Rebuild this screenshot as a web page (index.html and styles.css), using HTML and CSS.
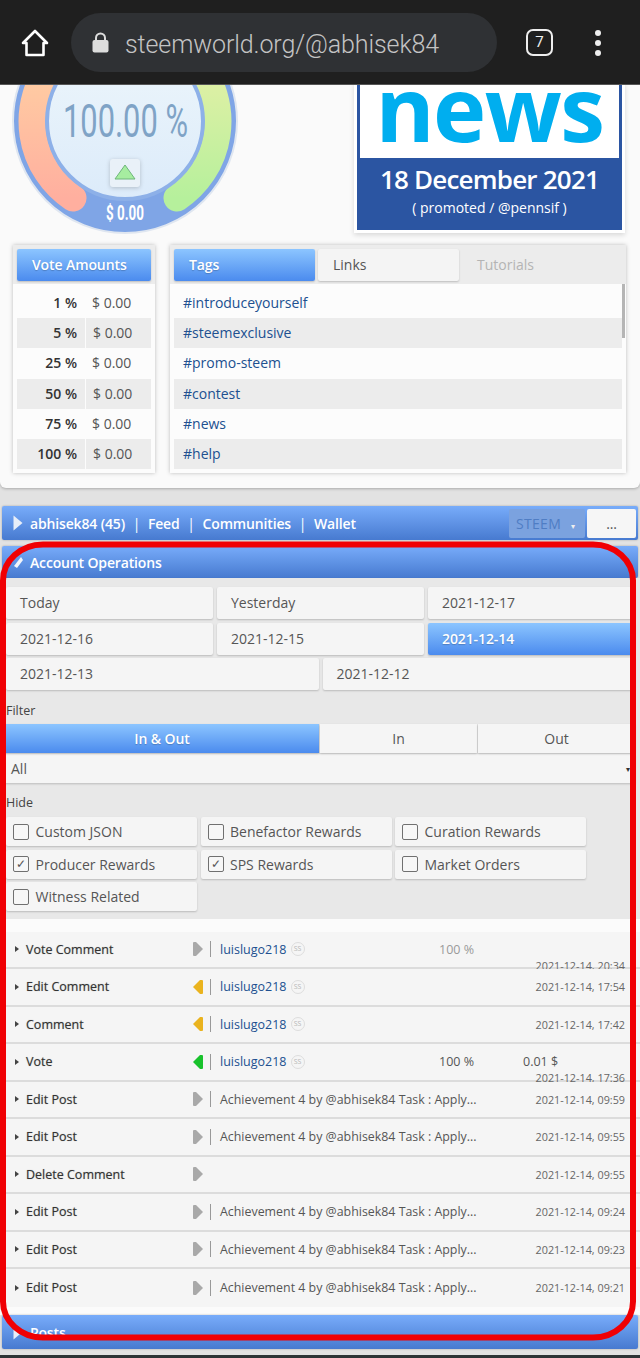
FILE: index.html
```html
<!DOCTYPE html>
<html lang="en">

<head>
    <meta charset="UTF-8">
    <meta name="viewport" content="width=device-width, initial-scale=1.0">
    <title>SteemWorld: abhisek84</title>
    <link rel="stylesheet" href="styles.css">
</head>

<body>
    <header class="browser-bar">
        <svg class="home-icon" width="30" height="30" viewBox="0 0 30 30">
            <path d="M15 3 L27 15 H23.5 V27 H6.5 V15 H3 Z" fill="none" stroke="#fff" stroke-width="2.6" stroke-linejoin="round"/>
        </svg>
        <div class="url-pill">
            <svg class="lock-icon" width="17" height="21" viewBox="0 0 17 21">
                <path d="M4 9 V6 a4.5 4.5 0 0 1 9 0 V9" fill="none" stroke="#ddd" stroke-width="2"/>
                <rect x="0.5" y="8" width="16" height="12.500" rx="2" fill="#ddd"/>
            </svg>
            <span class="url-text">steemworld.org/@abhisek84</span>
        </div>
        <div class="tab-count">7</div>
        <div class="menu-dots"><i></i><i></i><i></i></div>
    </header>

    <section class="top-panel">
        <div class="top-row">
            <svg class="gauge" width="250" height="160" viewBox="0 84 250 160">
                <defs>
                    <linearGradient id="orangeArc" x1="0" y1="0" x2="0" y2="1">
                        <stop offset="0" stop-color="#ffcfa3"/>
                        <stop offset="1" stop-color="#ffaf9f"/>
                    </linearGradient>
                    <linearGradient id="greenArc" x1="0" y1="0" x2="0" y2="1">
                        <stop offset="0" stop-color="#e4f0a6"/>
                        <stop offset="1" stop-color="#b6f09c"/>
                    </linearGradient>
                    <linearGradient id="gaugeFace" x1="0" y1="0" x2="0" y2="1">
                        <stop offset="0" stop-color="#edf6fb"/>
                        <stop offset="1" stop-color="#dcebfa"/>
                    </linearGradient>
                </defs>
                <circle cx="125" cy="120" r="112" fill="#7fa5e6" stroke="#dfe6f0" stroke-width="2"/>
                <path d="M53 62 A 92 92 0 0 0 73 197" fill="none" stroke="url(#orangeArc)" stroke-width="27" stroke-linecap="round"/>
                <path d="M197 62 A 92 92 0 0 1 177 197" fill="none" stroke="url(#greenArc)" stroke-width="27" stroke-linecap="round"/>
                <circle cx="125" cy="120" r="78" fill="url(#gaugeFace)" stroke="#8db0e8" stroke-width="4"/>
                <text class="gauge-value" x="63" y="136" textLength="125" lengthAdjust="spacingAndGlyphs">100.00 %</text>
                <rect class="gauge-btn" x="110" y="158" width="30" height="28" rx="3" fill="#e9f1f8"/>
                <path d="M115 178 L125 164 L135 178 Z" fill="#a6eda0" stroke="#6fb57b" stroke-width="1" stroke-linejoin="round"/>
                <text class="gauge-money" x="106" y="219" textLength="38" lengthAdjust="spacingAndGlyphs">$ 0.00</text>
            </svg>
            <div class="news-card">
                <div class="news-head"><span class="news-word">news</span></div>
                <div class="news-date">18 December 2021</div>
                <div class="news-sub">( promoted / @pennsif )</div>
            </div>
        </div>
        <div class="tables">
            <div class="votes">
                <div class="tab-row"><div class="tab tab-on tab-full">Vote Amounts</div></div>
                <div class="vote-list">
                    <div class="vote-row"><b>1 %</b><span>$ 0.00</span></div>
                    <div class="vote-row alt"><b>5 %</b><span>$ 0.00</span></div>
                    <div class="vote-row"><b>25 %</b><span>$ 0.00</span></div>
                    <div class="vote-row alt"><b>50 %</b><span>$ 0.00</span></div>
                    <div class="vote-row"><b>75 %</b><span>$ 0.00</span></div>
                    <div class="vote-row alt"><b>100 %</b><span>$ 0.00</span></div>
                </div>
            </div>
            <div class="tags">
                <div class="tab-row">
                    <div class="tab tab-on">Tags</div>
                    <div class="tab">Links</div>
                    <div class="tab tab-off">Tutorials</div>
                </div>
                <div class="tag-list">
                    <div class="tag-row">#introduceyourself</div>
                    <div class="tag-row alt">#steemexclusive</div>
                    <div class="tag-row">#promo-steem</div>
                    <div class="tag-row alt">#contest</div>
                    <div class="tag-row">#news</div>
                    <div class="tag-row alt">#help</div>
                    <div class="tag-scroll"></div>
                </div>
            </div>
        </div>
    </section>

    <nav class="blue-bar user-bar">
        <svg class="bar-arrow" width="12" height="18" viewBox="0 0 12 18"><path d="M1.500 1.500 L10.500 9 L1.500 16.500 Z" fill="#e8eef8"/></svg>
        <span>abhisek84 (45)</span><span class="sep">|</span>
        <span>Feed</span><span class="sep">|</span>
        <span>Communities</span><span class="sep">|</span>
        <span>Wallet</span>
        <div class="steem-select">STEEM<small>▾</small></div>
        <div class="more-btn">...</div>
    </nav>

    <section class="operations">
        <div class="blue-bar ops-bar">
            <svg class="bar-arrow" width="12" height="18" viewBox="0 0 12 18"><path d="M2 13 L9 4 L11 7 L5 15 Z" fill="#f2f5fa"/></svg>
            <span>Account Operations</span>
        </div>
        <div class="ops-body">
            <div class="date-row">
                <div class="btn">Today</div>
                <div class="btn">Yesterday</div>
                <div class="btn">2021-12-17</div>
            </div>
            <div class="date-row">
                <div class="btn">2021-12-16</div>
                <div class="btn">2021-12-15</div>
                <div class="btn btn-on">2021-12-14</div>
            </div>
            <div class="date-row">
                <div class="btn">2021-12-13</div>
                <div class="btn">2021-12-12</div>
            </div>

            <div class="field-label filter-label">Filter</div>
            <div class="filter-row">
                <div class="filter-btn filter-main btn-on">In &amp; Out</div>
                <div class="filter-btn filter-in">In</div>
                <div class="filter-btn filter-out">Out</div>
            </div>
            <div class="select-all">All<small>▾</small></div>

            <div class="field-label hide-label">Hide</div>
            <div class="check-grid">
                <div class="check"><i class="box"></i>Custom JSON</div>
                <div class="check"><i class="box"></i>Benefactor Rewards</div>
                <div class="check"><i class="box"></i>Curation Rewards</div>
                <div class="check"><i class="box on">✓</i>Producer Rewards</div>
                <div class="check"><i class="box on">✓</i>SPS Rewards</div>
                <div class="check"><i class="box"></i>Market Orders</div>
                <div class="check"><i class="box"></i>Witness Related</div>
            </div>
        </div>

        <div class="op-list">
            <div class="op-row">
                <i class="caret"></i><span class="op-name">Vote Comment</span>
                <svg class="dir" width="12" height="16" viewBox="0 0 12 16"><path d="M1 2 Q1 1 2 1 H4 L11 8 L4 15 H2 Q1 15 1 14 Z" fill="#a9a9a9"/></svg>
                <span class="op-sep"></span><a class="op-user">luislugo218</a><span class="ss">SS</span>
                <span class="op-pct muted">100 %</span>
                <span class="op-time low">2021-12-14, 20:34</span>
            </div>
            <div class="op-row">
                <i class="caret"></i><span class="op-name">Edit Comment</span>
                <svg class="dir" width="12" height="16" viewBox="0 0 12 16"><path d="M11 2 Q11 1 10 1 H8 L1 8 L8 15 H10 Q11 15 11 14 Z" fill="#eab31e"/></svg>
                <span class="op-sep"></span><a class="op-user">luislugo218</a><span class="ss">SS</span>
                <span class="op-time">2021-12-14, 17:54</span>
            </div>
            <div class="op-row">
                <i class="caret"></i><span class="op-name">Comment</span>
                <svg class="dir" width="12" height="16" viewBox="0 0 12 16"><path d="M11 2 Q11 1 10 1 H8 L1 8 L8 15 H10 Q11 15 11 14 Z" fill="#eab31e"/></svg>
                <span class="op-sep"></span><a class="op-user">luislugo218</a><span class="ss">SS</span>
                <span class="op-time">2021-12-14, 17:42</span>
            </div>
            <div class="op-row">
                <i class="caret"></i><span class="op-name">Vote</span>
                <svg class="dir" width="12" height="16" viewBox="0 0 12 16"><path d="M11 2 Q11 1 10 1 H8 L1 8 L8 15 H10 Q11 15 11 14 Z" fill="#18c22c"/></svg>
                <span class="op-sep"></span><a class="op-user">luislugo218</a><span class="ss">SS</span>
                <span class="op-pct">100 %</span><span class="op-amount">0.01 $</span>
                <span class="op-time low">2021-12-14, 17:36</span>
            </div>
            <div class="op-row">
                <i class="caret"></i><span class="op-name">Edit Post</span>
                <svg class="dir" width="12" height="16" viewBox="0 0 12 16"><path d="M1 2 Q1 1 2 1 H4 L11 8 L4 15 H2 Q1 15 1 14 Z" fill="#a9a9a9"/></svg>
                <span class="op-sep"></span><span class="op-title">Achievement 4 by @abhisek84 Task : Apply...</span>
                <span class="op-time">2021-12-14, 09:59</span>
            </div>
            <div class="op-row">
                <i class="caret"></i><span class="op-name">Edit Post</span>
                <svg class="dir" width="12" height="16" viewBox="0 0 12 16"><path d="M1 2 Q1 1 2 1 H4 L11 8 L4 15 H2 Q1 15 1 14 Z" fill="#a9a9a9"/></svg>
                <span class="op-sep"></span><span class="op-title">Achievement 4 by @abhisek84 Task : Apply...</span>
                <span class="op-time">2021-12-14, 09:55</span>
            </div>
            <div class="op-row">
                <i class="caret"></i><span class="op-name">Delete Comment</span>
                <svg class="dir" width="12" height="16" viewBox="0 0 12 16"><path d="M1 2 Q1 1 2 1 H4 L11 8 L4 15 H2 Q1 15 1 14 Z" fill="#a9a9a9"/></svg>
                <span class="op-time">2021-12-14, 09:55</span>
            </div>
            <div class="op-row">
                <i class="caret"></i><span class="op-name">Edit Post</span>
                <svg class="dir" width="12" height="16" viewBox="0 0 12 16"><path d="M1 2 Q1 1 2 1 H4 L11 8 L4 15 H2 Q1 15 1 14 Z" fill="#a9a9a9"/></svg>
                <span class="op-sep"></span><span class="op-title">Achievement 4 by @abhisek84 Task : Apply...</span>
                <span class="op-time">2021-12-14, 09:24</span>
            </div>
            <div class="op-row">
                <i class="caret"></i><span class="op-name">Edit Post</span>
                <svg class="dir" width="12" height="16" viewBox="0 0 12 16"><path d="M1 2 Q1 1 2 1 H4 L11 8 L4 15 H2 Q1 15 1 14 Z" fill="#a9a9a9"/></svg>
                <span class="op-sep"></span><span class="op-title">Achievement 4 by @abhisek84 Task : Apply...</span>
                <span class="op-time">2021-12-14, 09:23</span>
            </div>
            <div class="op-row">
                <i class="caret"></i><span class="op-name">Edit Post</span>
                <svg class="dir" width="12" height="16" viewBox="0 0 12 16"><path d="M1 2 Q1 1 2 1 H4 L11 8 L4 15 H2 Q1 15 1 14 Z" fill="#a9a9a9"/></svg>
                <span class="op-sep"></span><span class="op-title">Achievement 4 by @abhisek84 Task : Apply...</span>
                <span class="op-time">2021-12-14, 09:21</span>
            </div>
        </div>
    </section>

    <div class="blue-bar posts-bar">
        <svg class="bar-arrow" width="12" height="18" viewBox="0 0 12 18"><path d="M1.500 1.500 L10.500 9 L1.500 16.500 Z" fill="#e8eef8"/></svg>
        <span>Posts</span>
    </div>
    <div class="bottom-strip"></div>

    <!-- red marker drawn over the screenshot -->
    <svg class="marker" width="640" height="1358" viewBox="0 0 640 1358">
        <rect x="3" y="544.500" width="630" height="793" rx="40" ry="36" fill="none" stroke="#f00004" stroke-width="6"/>
    </svg>
</body>

</html>
```

FILE: styles.css
```css
* {
    margin: 0;
    padding: 0;
    box-sizing: border-box;
    font-family: 'Open Sans', 'Noto Sans', sans-serif;
}

html,
body {
    width: 640px;
    height: 1358px;
    overflow: hidden;
}

body {
    position: relative;
    background: #e2e2e2;
    color: #444;
    font-size: 14px;
}

/* browser chrome */
.browser-bar {
    height: 85px;
    background: #1f1f1f;
    border-bottom: 1px solid #5a5a5a;
    display: flex;
    align-items: center;
    padding: 1px 0 0 20px;
}

.home-icon {
    flex: none;
}

.url-pill {
    width: 426px;
    height: 59px;
    margin-left: 21px;
    background: #2f3134;
    border-radius: 30px;
    display: flex;
    align-items: center;
    padding-left: 21px;
}

.url-text {
    margin: 4px 0 0 16px;
    font-family: 'Roboto', sans-serif;
    font-weight: 300;
    font-size: 25px;
    letter-spacing: -0.1px;
    color: #c4c4c4;
}

.tab-count {
    width: 27px;
    height: 27px;
    margin-left: 29px;
    border: 2.5px solid #eee;
    border-radius: 7px;
    color: #eee;
    font-family: 'Roboto', sans-serif;
    font-size: 15px;
    line-height: 22px;
    text-align: center;
}

.menu-dots {
    margin-left: 42px;
    display: flex;
    flex-direction: column;
    gap: 4px;
}

.menu-dots i {
    width: 6px;
    height: 6px;
    background: #eee;
    border-radius: 50%;
}

/* top panel */
.top-panel {
    height: 403px;
    background: #fafafa;
    border-radius: 0 0 6px 6px;
    box-shadow: 0 1px 3px rgba(0, 0, 0, 0.25);
    overflow: hidden;
}

.top-row {
    height: 160px;
    display: flex;
}

.gauge {
    flex: none;
}

.gauge-value {
    font-family: 'Roboto', sans-serif;
    font-weight: 400;
    font-size: 46px;
    fill: #7fa3c6;
}

.gauge-btn {
    filter: drop-shadow(0 1px 2px rgba(0, 0, 0, 0.2));
}

.gauge-money {
    font-family: 'Roboto', sans-serif;
    font-weight: 700;
    font-size: 21px;
    fill: #fff;
}

.news-card {
    width: 265px;
    height: 145px;
    margin-left: 107px;
    border: 3px solid #2b55a2;
    border-top: 0;
    outline: 3px solid #fff;
    box-shadow: 0 2px 5px 3px rgba(0, 0, 0, 0.14);
    background: #2b55a2;
    color: #fff;
    text-align: center;
}

.news-head {
    height: 73px;
    background: #fff;
    overflow: hidden;
}

.news-word {
    display: block;
    margin-top: -38px;
    font-size: 90px;
    line-height: 120px;
    font-weight: 700;
    letter-spacing: -1.5px;
    color: #00aeef;
}

.news-date {
    margin-top: 4px;
    font-size: 26px;
    line-height: 34px;
    font-weight: 600;
    letter-spacing: -0.8px;
}

.news-sub {
    font-size: 14px;
    line-height: 22px;
    margin-top: 1px;
}

.tables {
    display: flex;
    padding: 0 14px 0 13px;
    gap: 15px;
}

.votes,
.tags {
    background: #fcfcfc;
    box-shadow: 0 0 4px rgba(0, 0, 0, 0.25);
    height: 228px;
}

.votes {
    width: 142px;
}

.tags {
    flex: 1;
}

.tab-row {
    height: 39px;
    padding: 4px 4px 3px;
    display: flex;
    gap: 3px;
    background: #ececec;
}

.tab {
    width: 141px;
    background: #f4f4f4;
    border-radius: 2px;
    box-shadow: 0 1px 2px rgba(0, 0, 0, 0.2);
    padding-left: 15px;
    line-height: 31px;
    color: #555;
}

.tab-full {
    width: 100%;
}

.tab-on {
    background: linear-gradient(#8cc5ff, #4b8bee);
    color: #fff;
    font-weight: 600;
    letter-spacing: -0.1px;
    text-shadow: 0 1px 1px rgba(0, 0, 0, 0.2);
}

.tab-off {
    flex: 1;
    background: #ececec;
    color: #b4b4b4;
    box-shadow: none;
}

.vote-list,
.tag-list {
    padding: 4px 4px 0;
    position: relative;
}

.vote-row,
.tag-row {
    height: 30.2px;
    line-height: 30px;
}

.vote-row {
    display: flex;
}

.vote-row b {
    width: 68px;
    padding-right: 8px;
    text-align: right;
    font-weight: 600;
    color: #333;
}

.vote-row span {
    flex: 1;
    padding-left: 7px;
    color: #555;
}

.vote-row.alt b,
.vote-row.alt span {
    background: #ececec;
}

.vote-row.alt b {
    margin-right: 1px;
}

.tag-row {
    padding-left: 9px;
    color: #205090;
}

.tag-row.alt {
    background: #ececec;
}

.tag-scroll {
    position: absolute;
    top: 0;
    right: 1px;
    width: 3px;
    height: 54px;
    background: #b5b5b5;
}

/* blue section bars */
.blue-bar {
    height: 34px;
    margin: 0 2px;
    background: linear-gradient(#78acfa, #477ad0);
    border-radius: 2px;
    box-shadow: 0 0 2px rgba(0, 0, 0, 0.3);
    display: flex;
    align-items: center;
    padding-left: 10px;
    color: #fff;
    font-weight: 600;
    font-size: 14px;
    letter-spacing: -0.15px;
}

.bar-arrow {
    margin-right: 6px;
    flex: none;
}

.user-bar {
    margin-top: 18px;
    position: relative;
}

.sep {
    margin: 0 7.700px;
    font-weight: 400;
}

.steem-select {
    margin-left: auto;
    width: 76px;
    height: 29px;
    line-height: 29px;
    padding-left: 7px;
    background: #7ba2df;
    border-radius: 2px;
    color: #4f7dc4;
    font-weight: 400;
    letter-spacing: 0.3px;
}

.steem-select small {
    margin-left: 10px;
    font-size: 8px;
    color: #eee;
}

.more-btn {
    width: 49px;
    height: 29px;
    margin: 0 2px;
    background: #f6f6f6;
    border-radius: 2px;
    color: #555;
    font-weight: 400;
    text-align: center;
    line-height: 30px;
}

.operations {
    margin-top: 6px;
}

.ops-bar {
    height: 32px;
}

.ops-body {
    height: 341px;
    background: #e8e8e8;
    padding: 9px 5px 0 6px;
    box-shadow: 0 1px 2px rgba(0, 0, 0, 0.2);
}

.date-row {
    display: flex;
    gap: 4px;
    margin-bottom: 3.500px;
}

.btn {
    flex: 1;
    height: 32px;
    line-height: 32px;
    padding-left: 14px;
    background: #f5f5f5;
    border-radius: 2px;
    box-shadow: 0 1px 2px rgba(0, 0, 0, 0.2);
    color: #555;
}

.field-label {
    font-size: 12.500px;
    line-height: 16px;
    color: #444;
}

.filter-label {
    margin-top: 13px;
    margin-bottom: 5px;
}

.filter-row {
    display: flex;
    height: 29px;
    margin-left: -1px;
    gap: 1px;
}

.filter-btn {
    text-align: center;
    line-height: 29px;
    background: #f5f5f5;
    box-shadow: 0 1px 2px rgba(0, 0, 0, 0.2);
    color: #555;
}

.filter-main {
    width: 314px;
}

.filter-in {
    width: 157px;
}

.filter-out {
    flex: 1;
}

.btn-on,
.btn.btn-on,
.filter-btn.btn-on {
    background: linear-gradient(#8cc5ff, #4b8bee);
    color: #fff;
    font-weight: 600;
    letter-spacing: -0.1px;
    text-shadow: 0 1px 1px rgba(0, 0, 0, 0.2);
}

.select-all {
    height: 29px;
    line-height: 29px;
    margin: 1px 0 0 -1px;
    padding: 0 5px 0 6px;
    background: #f5f5f5;
    box-shadow: 0 1px 2px rgba(0, 0, 0, 0.2);
    color: #555;
    display: flex;
    justify-content: space-between;
}

.select-all small {
    font-size: 8px;
    color: #333;
}

.hide-label {
    margin-top: 12px;
    margin-bottom: 6px;
}

.check-grid {
    display: grid;
    grid-template-columns: repeat(3, 191px);
    grid-auto-rows: 29px;
    gap: 3.500px;
}

.check {
    display: flex;
    align-items: center;
    padding-left: 7px;
    background: #f5f5f5;
    border-radius: 2px;
    box-shadow: 0 1px 2px rgba(0, 0, 0, 0.2);
    color: #555;
}

.box {
    width: 16px;
    height: 16px;
    margin-right: 6.500px;
    border: 1.500px solid #707070;
    border-radius: 2px;
    background: #f7f7f7;
    font-style: normal;
    font-size: 12px;
    line-height: 13px;
    text-align: center;
    color: #555;
}

/* operations list */
.op-list {
    height: 396px;
    padding-top: 12.500px;
    background: #fbfbfb;
}

.op-row {
    height: 37.500px;
    background: #f5f5f5;
    border-bottom: 2px solid #dcdcdc;
    display: flex;
    align-items: center;
    padding-left: 15px;
    position: relative;
    font-size: 12.500px;
}

.op-row:last-child {
    border-bottom: 0;
}

.caret {
    width: 0;
    height: 0;
    border-left: 4px solid #444;
    border-top: 3.500px solid transparent;
    border-bottom: 3.500px solid transparent;
    margin-right: 7px;
}

.op-name {
    width: 166px;
    color: #333;
    font-size: 12.500px;
    text-shadow: 0 0 1px rgba(0, 0, 0, 0.35);
}

.dir {
    flex: none;
}

.op-sep {
    width: 1px;
    height: 16px;
    margin: 0 9px 0 6px;
    background: #999;
}

.op-user {
    color: #205090;
}

.ss {
    width: 14px;
    height: 14px;
    margin-left: 4px;
    border: 1px solid #ddd;
    border-radius: 50%;
    color: #b5b5b5;
    font-size: 7px;
    line-height: 12px;
    text-align: center;
}

.op-title {
    color: #555;
    font-size: 12.400px;
    white-space: nowrap;
}

.op-pct {
    position: absolute;
    left: 439px;
    color: #555;
}

.op-pct.muted {
    color: #9a9a9a;
}

.op-amount {
    position: absolute;
    left: 523px;
    color: #555;
}

.op-time {
    position: absolute;
    right: 15px;
    font-size: 10.800px;
    color: #666;
}

.op-time.low {
    top: 26px;
}

.posts-bar {
    position: relative;
}

.bottom-strip {
    height: 3px;
    margin-top: 6px;
    background: #2d3436;
}

.marker {
    position: absolute;
    top: 0;
    left: 0;
    pointer-events: none;
}
```
